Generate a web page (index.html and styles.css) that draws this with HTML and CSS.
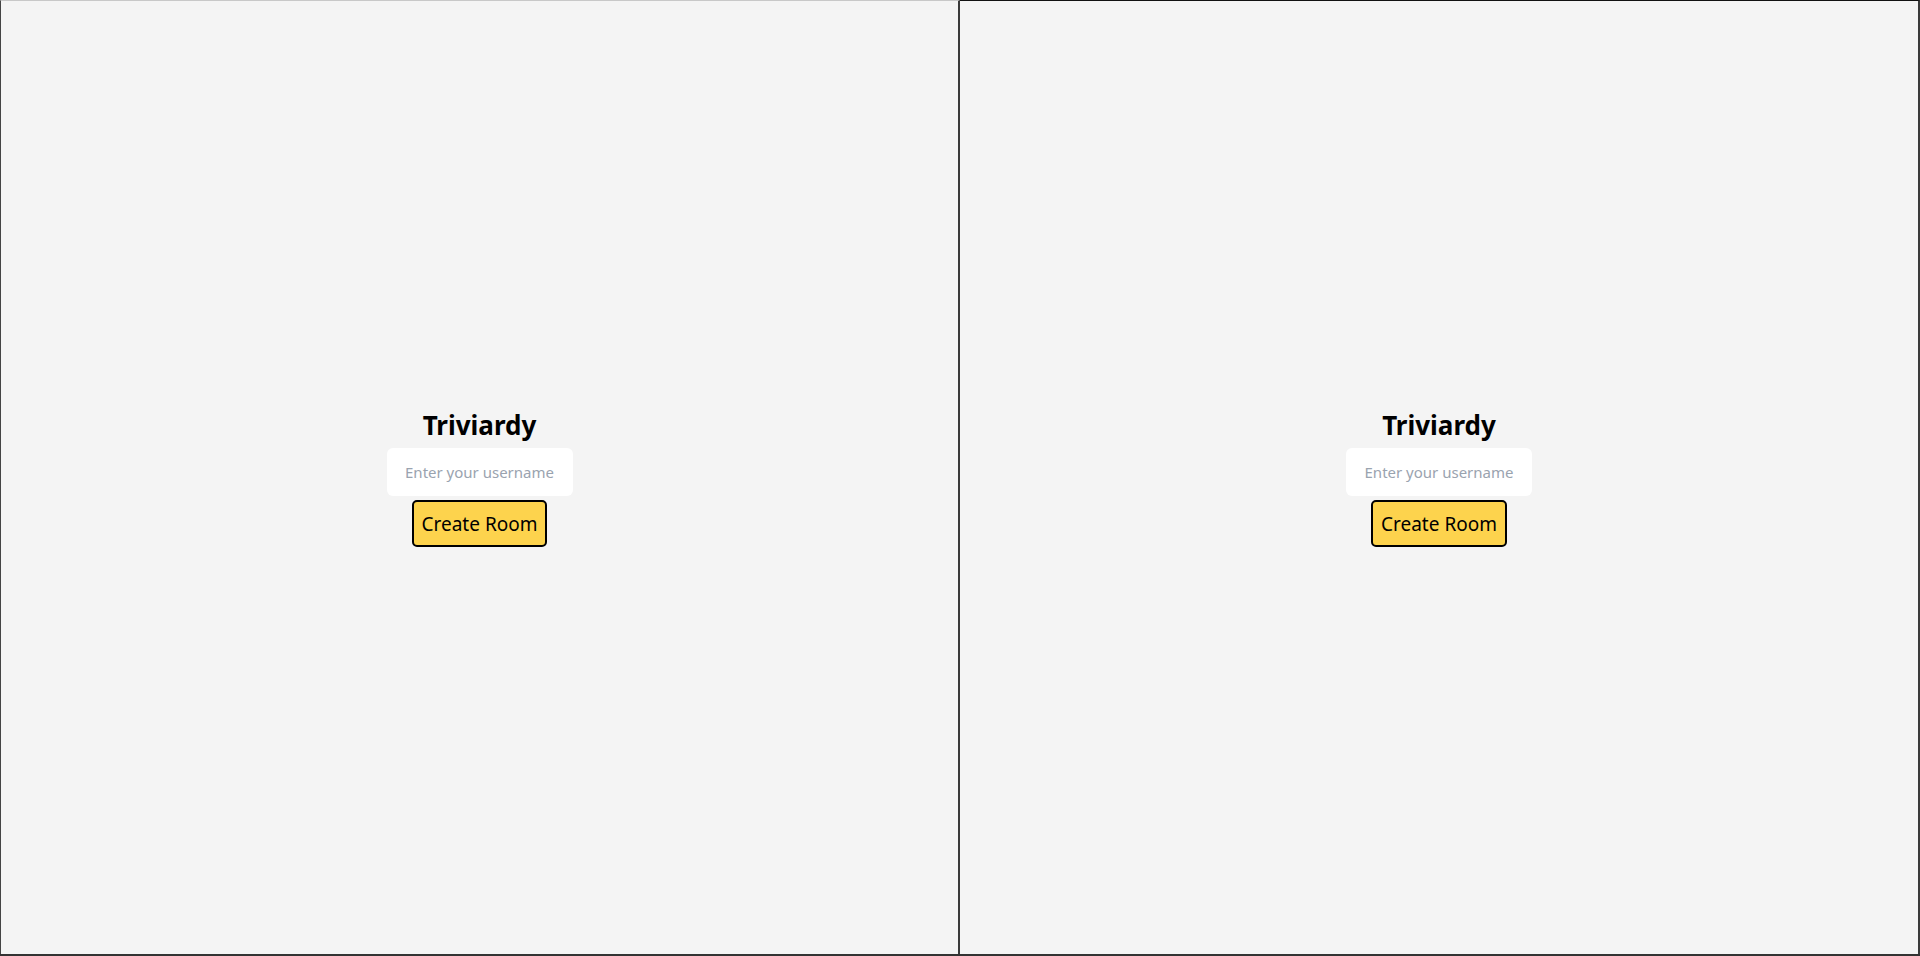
FILE: index.html
```html
<!DOCTYPE html>
<html lang="en">
<head>
<meta charset="utf-8">
<title>Triviardy</title>
<link rel="stylesheet" href="styles.css">
</head>
<body>
<div class="screen">
  <div class="pane pane-left">
    <div class="lobby">
      <h1 class="title">Triviardy</h1>
      <input class="username" type="text" placeholder="Enter your username">
      <button class="create">Create Room</button>
    </div>
  </div>
  <div class="pane pane-right">
    <div class="lobby">
      <h1 class="title">Triviardy</h1>
      <input class="username" type="text" placeholder="Enter your username">
      <button class="create">Create Room</button>
    </div>
  </div>
</div>
</body>
</html>
```
FILE: styles.css
```css
* { box-sizing: border-box; }
html, body { margin: 0; padding: 0; height: 100%; }
body {
  background: #f4f4f4;
  font-family: "Noto Sans", "Open Sans", sans-serif;
  overflow: hidden;
}
.screen {
  display: flex;
  width: 1920px;
  height: 956px;
  border-bottom: 2px solid #333;
}
.pane {
  flex: 0 0 auto;
  height: 100%;
  background: #f4f4f4;
  display: flex;
  align-items: center;
  justify-content: center;
}
.pane-left {
  width: 960px;
  border-left: 1px solid #444;
  border-top: 1px solid #c8c8c8;
  border-right: 2px solid #3a3a3a;
}
.pane-right {
  width: 960px;
  border-top: 1px solid #111;
  border-right: 2px solid #3a3a3a;
}
.lobby {
  display: flex;
  flex-direction: column;
  align-items: center;
  gap: 4px;
}
.title {
  margin: 0 0 2px;
  font-size: 26px;
  font-weight: 700;
  color: #000;
  line-height: 34px;
}
.username {
  width: 186px;
  height: 48px;
  border: none;
  border-radius: 6px;
  background: #fff;
  padding: 0 12px;
  font-family: inherit;
  font-size: 15px;
  text-align: center;
  outline: none;
}
.username::placeholder { color: #9aa3af; }
.create {
  height: 47px;
  padding: 0 8px;
  background: #fdd34d;
  border: 2px solid #000;
  border-radius: 5px;
  font-family: inherit;
  font-size: 19px;
  color: #000;
}
```
